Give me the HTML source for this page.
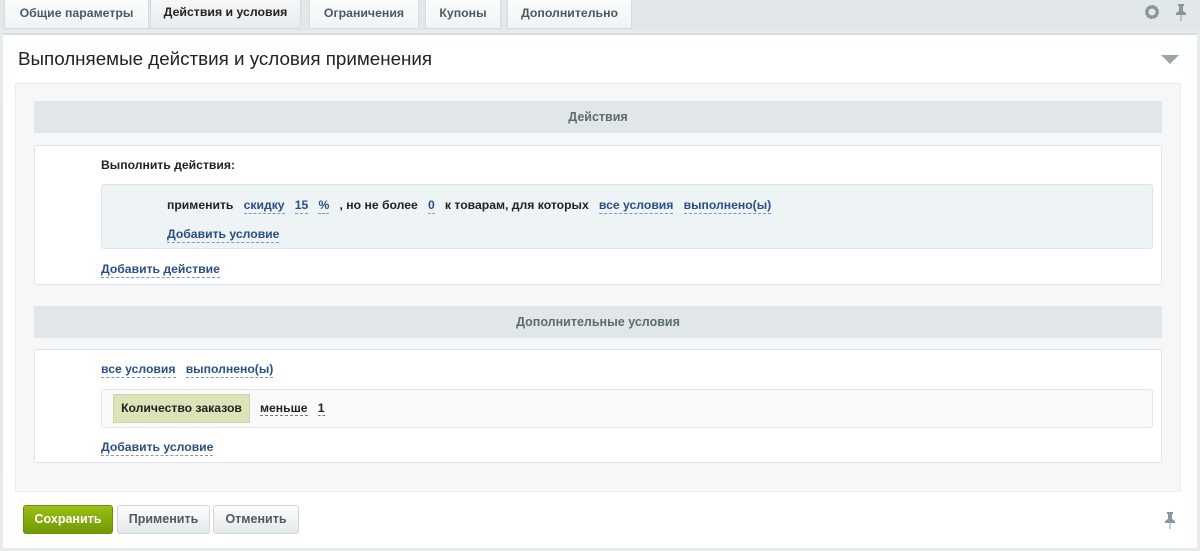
<!DOCTYPE html>
<html><head><meta charset="utf-8"><style>
*{box-sizing:border-box;margin:0;padding:0}
body{width:1200px;height:551px;background:#e5ecee;font-family:"Liberation Sans",sans-serif;position:relative;overflow:hidden;font-size:12.2px}
.a{position:absolute}
.tab{position:absolute;top:0;height:29px;background:linear-gradient(#fbfcfc,#f0f3f4);border:1px solid #d5dcdf;border-top:none;font-size:12.3px;font-weight:bold;color:#4b5a62;text-align:center;line-height:27px}
.tab.act{background:linear-gradient(#f5f7f8,#e6ecee);color:#222;line-height:24px}
.lk{color:#2a4f85;font-weight:bold;border-bottom:1px dashed #7d97b9;padding-bottom:1px}
.b{font-weight:bold;color:#222}
.hdr{position:absolute;left:34px;width:1128px;height:32px;background:#e1e7e9;color:#5d6b72;font-weight:bold;text-align:center;line-height:32px;font-size:12.5px}
.btn{position:absolute;top:505px;height:29px;border-radius:3px;font-weight:bold;text-align:center;line-height:27px;font-size:12.5px}
</style></head><body>
<div class="a" style="left:0;top:0;width:1200px;height:30px;background:#e2e8ea"></div>
<div class="tab" style="left:4px;width:145px">Общие параметры</div>
<div class="tab act" style="left:150px;width:151px">Действия и условия</div>
<div class="tab" style="left:309px;width:110px">Ограничения</div>
<div class="tab" style="left:425px;width:76px">Купоны</div>
<div class="tab" style="left:507px;width:125px">Дополнительно</div>
<svg class="a" style="left:1145px;top:5px" width="14" height="14" viewBox="0 0 14 14"><circle cx="7" cy="7" r="5" fill="none" stroke="#8a969c" stroke-width="3"/><circle cx="7" cy="7" r="6.3" fill="none" stroke="#8a969c" stroke-width="1.6" stroke-dasharray="2 1.3"/></svg>
<svg class="a" style="left:1175px;top:4px" width="12" height="17" viewBox="0 0 12 17"><path d="M3 0h6v2H8v5l3 2v2H1V9l3-2V2H3z M5.5 11h1v6h-1z" fill="#8a969c"/></svg>
<div class="a" style="left:3px;top:33px;width:1194px;height:515px;background:#fff;border-top:2px solid #d6dee1"></div>
<div class="a" style="left:18px;top:48px;font-size:18.8px;color:#222">Выполняемые действия и условия применения</div>
<svg class="a" style="left:1161px;top:55px" width="18" height="10"><path d="M0 0h18L9 9z" fill="#9aa4a9"/></svg>
<div class="a" style="left:15px;top:83px;width:1166px;height:409px;background:#f5f7f8;border:1px solid #e8edef"></div>
<div class="hdr" style="top:101px">Действия</div>
<div class="a" style="left:34px;top:145px;width:1128px;height:140px;background:#fff;border:1px solid #dfe5e8;border-radius:3px"></div>
<div class="a b" style="left:101px;top:158px">Выполнить действия:</div>
<div class="a" style="left:101px;top:184px;width:1052px;height:65px;background:#eef3f5;border:1px solid #dde4e7;border-radius:3px"></div>
<div class="a" style="left:167px;top:198px;white-space:nowrap"><span class="b">применить</span>&nbsp;&nbsp; <span class="lk">скидку</span>&nbsp;&nbsp; <span class="lk">15</span>&nbsp;&nbsp; <span class="lk">%</span>&nbsp;&nbsp; <span class="b">, но не более</span>&nbsp;&nbsp; <span class="lk">0</span>&nbsp;&nbsp; <span class="b">к товарам, для которых</span>&nbsp;&nbsp; <span class="lk">все условия</span>&nbsp;&nbsp; <span class="lk">выполнено(ы)</span></div>
<div class="a" style="left:167px;top:227px"><span class="lk">Добавить условие</span></div>
<div class="a" style="left:101px;top:262px"><span class="lk">Добавить действие</span></div>
<div class="hdr" style="top:306px">Дополнительные условия</div>
<div class="a" style="left:34px;top:349px;width:1128px;height:114px;background:#fff;border:1px solid #dfe5e8;border-radius:3px"></div>
<div class="a" style="left:101px;top:362px"><span class="lk">все условия</span>&nbsp;&nbsp; <span class="lk">выполнено(ы)</span></div>
<div class="a" style="left:101px;top:389px;width:1052px;height:39px;background:#f9fafb;border:1px solid #e0e6e8;border-radius:3px"></div>
<div class="a b" style="left:113px;top:394px;width:137px;height:29px;background:#dde3b8;border:1px solid #cfd6a5;line-height:27px;text-align:center">Количество заказов</div>
<div class="a" style="left:260px;top:401px;white-space:nowrap"><span class="b" style="border-bottom:1px dashed #777">меньше</span>&nbsp;&nbsp; <span class="b" style="border-bottom:1px dashed #777">1</span></div>
<div class="a" style="left:101px;top:440px"><span class="lk">Добавить условие</span></div>
<div class="btn" style="left:23px;width:90px;background:linear-gradient(#9cbe14,#6f9a05);color:#fff;border:1px solid #6a8f0a">Сохранить</div>
<div class="btn" style="left:117px;width:93px;background:linear-gradient(#fdfefe,#e3e8ea);color:#4d5a61;border:1px solid #cfd6d9">Применить</div>
<div class="btn" style="left:213px;width:86px;background:linear-gradient(#fdfefe,#e3e8ea);color:#4d5a61;border:1px solid #cfd6d9">Отменить</div>
<svg class="a" style="left:1164px;top:512px" width="12" height="17" viewBox="0 0 12 17"><path d="M3 0h6v2H8v5l3 2v2H1V9l3-2V2H3z M5.5 11h1v6h-1z" fill="#8a969c"/></svg>
</body></html>
